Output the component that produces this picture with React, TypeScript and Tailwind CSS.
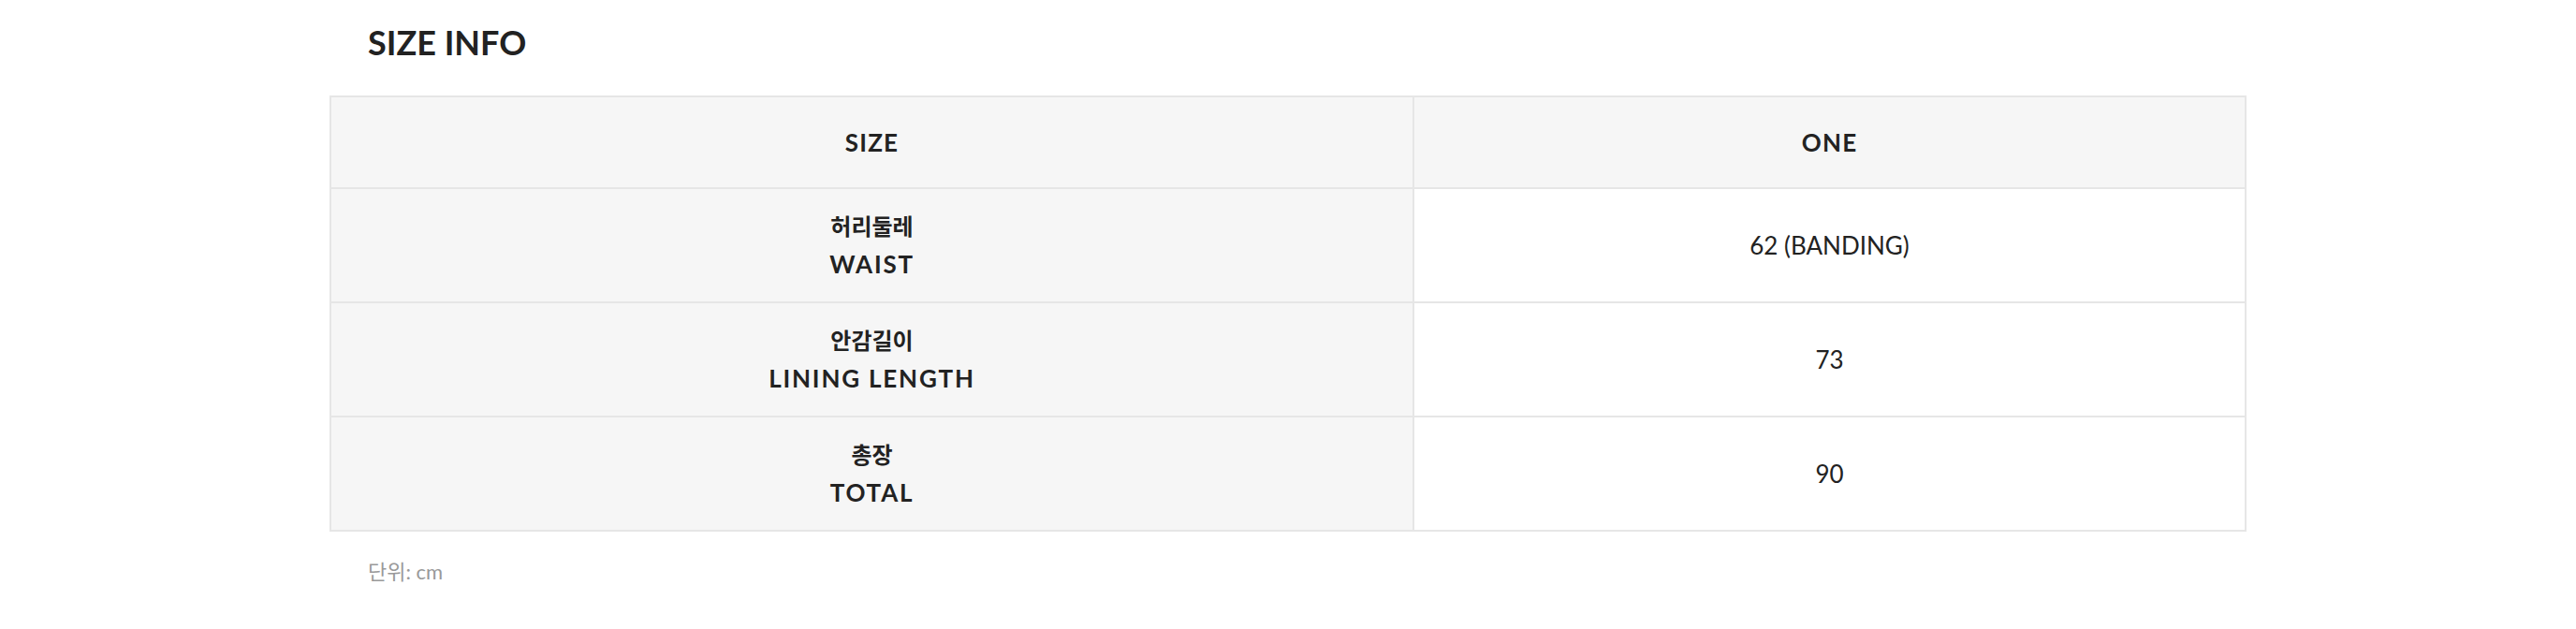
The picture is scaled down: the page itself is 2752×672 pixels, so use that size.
const rows = [
  { ko: '허리둘레', en: 'WAIST', value: '62 (BANDING)' },
  { ko: '안감길이', en: 'LINING LENGTH', value: '73' },
  { ko: '총장', en: 'TOTAL', value: '90' },
];

const font = "font-['Lato','Noto_Sans_CJK_KR',sans-serif]";

function App() {
  return (
    <div className={`min-h-[672px] w-full bg-white text-[#222] ${font}`}>
      <div className="ml-[352px] w-[2048px]">
        <h2 className="pt-[27px] pl-[41px] text-[36px] font-bold leading-none">SIZE INFO</h2>

        <div className="mt-[39px] border-2 border-[#e6e6e6]">
          {/* header */}
          <div className="flex h-[96px] bg-[#f6f6f6] text-[26px] font-bold tracking-[1.2px]">
            <div className="flex w-[1155px] items-center justify-center">SIZE</div>
            <div className="flex flex-1 items-center justify-center border-l-2 border-[#e6e6e6]">ONE</div>
          </div>

          {rows.map(row => (
            <div key={row.en} className="flex h-[122px] border-t-2 border-[#e6e6e6]">
              <div className="flex w-[1155px] flex-col items-center justify-center bg-[#f6f6f6] font-bold leading-[41px]">
                <span className="text-[24px]">{row.ko}</span>
                <span className="text-[26px] tracking-[1.8px]">{row.en}</span>
              </div>
              <div className="flex flex-1 items-center justify-center border-l-2 border-[#e6e6e6] text-[26px]">
                {row.value}
              </div>
            </div>
          ))}
        </div>

        <p className="mt-[32px] pl-[41px] text-[22px] leading-none text-[#999]">단위: cm</p>
      </div>
    </div>
  );
}

export default App;
